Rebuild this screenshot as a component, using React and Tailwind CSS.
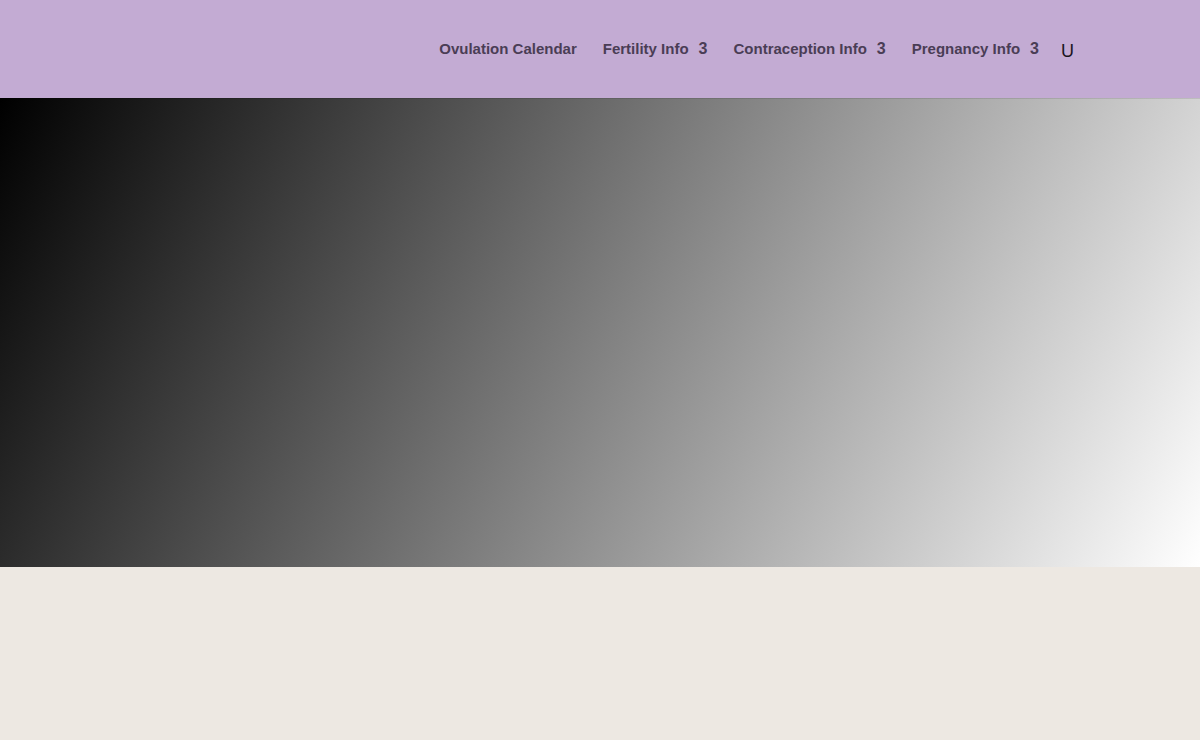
const menu = [
  { label: 'Ovulation Calendar', sub: false },
  { label: 'Fertility Info', sub: true },
  { label: 'Contraception Info', sub: true },
  { label: 'Pregnancy Info', sub: true },
]

export default function App() {
  return (
    <div className="min-h-[740px] bg-[#ede8e2] font-['Liberation_Sans',Arial,sans-serif]">
      <header className="h-[98px] bg-[#c3abd3] flex items-center justify-end pr-[126px] shadow-[0_1px_0_rgba(0,0,0,0.1)] relative z-10">
        <nav className="flex items-center gap-[26px] text-[15px] font-bold text-[#4a3d55]">
          {menu.map((item) => (
            <a key={item.label} className="flex items-center">
              {item.label}
              {item.sub && <span className="ml-[10px] text-[16px] font-bold leading-none">3</span>}
            </a>
          ))}
        </nav>
        <span className="ml-[22px] mt-[3px] text-[18px] text-[#1a1420] leading-none">U</span>
      </header>
      <section className="h-[469px] bg-[linear-gradient(118deg,#000_0%,#fff_100%)]" />
      <div className="h-[173px]" />
    </div>
  )
}
